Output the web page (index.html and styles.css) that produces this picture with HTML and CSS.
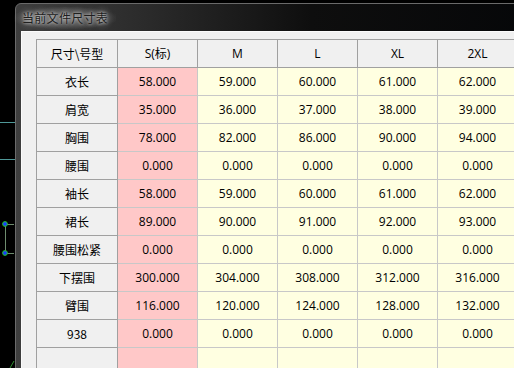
FILE: index.html
```html
<!DOCTYPE html>
<html lang="zh-CN">
<head>
<meta charset="utf-8">
<title>当前文件尺寸表</title>
<link rel="stylesheet" href="styles.css">
</head>
<body>
<div class="desk">
  <svg class="drawing" width="514" height="368" viewBox="0 0 514 368">
    <line x1="0" y1="122.5" x2="16" y2="122.5" stroke="#4f9898" stroke-width="1"/>
    <line x1="0" y1="159.5" x2="16" y2="159.5" stroke="#4f9898" stroke-width="1"/>
    <polyline points="14,224.5 5.5,224.5 5.5,253.5 14,253.5" fill="none" stroke="#6e8c6e" stroke-width="1"/>
    <circle cx="5" cy="224" r="2.4" fill="#1a3cff" stroke="#22c922" stroke-width="1"/>
    <circle cx="5" cy="253" r="2.4" fill="#1a3cff" stroke="#22c922" stroke-width="1"/>
    <line x1="10" y1="368" x2="14" y2="361" stroke="#2e8f2e" stroke-width="1"/>
  </svg>

  <div class="window">
    <div class="titlebar"><span class="title">当前文件尺寸表</span></div>
    <div class="client">
      <table class="sizes">
        <thead>
          <tr><th class="fixed">尺寸\号型</th><th>S(标)</th><th>M</th><th>L</th><th>XL</th><th>2XL</th></tr>
        </thead>
        <tbody>
          <tr><th class="fixed">衣长</th><td class="base">58.000</td><td>59.000</td><td>60.000</td><td>61.000</td><td>62.000</td></tr>
          <tr><th class="fixed">肩宽</th><td class="base">35.000</td><td>36.000</td><td>37.000</td><td>38.000</td><td>39.000</td></tr>
          <tr><th class="fixed">胸围</th><td class="base">78.000</td><td>82.000</td><td>86.000</td><td>90.000</td><td>94.000</td></tr>
          <tr><th class="fixed">腰围</th><td class="base">0.000</td><td>0.000</td><td>0.000</td><td>0.000</td><td>0.000</td></tr>
          <tr><th class="fixed">袖长</th><td class="base">58.000</td><td>59.000</td><td>60.000</td><td>61.000</td><td>62.000</td></tr>
          <tr><th class="fixed">裙长</th><td class="base">89.000</td><td>90.000</td><td>91.000</td><td>92.000</td><td>93.000</td></tr>
          <tr><th class="fixed">腰围松紧</th><td class="base">0.000</td><td>0.000</td><td>0.000</td><td>0.000</td><td>0.000</td></tr>
          <tr><th class="fixed">下摆围</th><td class="base">300.000</td><td>304.000</td><td>308.000</td><td>312.000</td><td>316.000</td></tr>
          <tr><th class="fixed">臂围</th><td class="base">116.000</td><td>120.000</td><td>124.000</td><td>128.000</td><td>132.000</td></tr>
          <tr><th class="fixed">938</th><td class="base">0.000</td><td>0.000</td><td>0.000</td><td>0.000</td><td>0.000</td></tr>
          <tr><th class="fixed"></th><td class="base"></td><td></td><td></td><td></td><td></td></tr>
        </tbody>
      </table>
    </div>
  </div>
</div>
</body>
</html>
```

FILE: styles.css
```css
html, body {
  margin: 0;
  padding: 0;
  background: #000;
  overflow: hidden;
}

.desk {
  position: relative;
  width: 514px;
  height: 368px;
  overflow: hidden;
  background: #000;
}

.drawing {
  position: absolute;
  left: 0;
  top: 0;
}

/* dark glass dialog frame */
.window {
  position: absolute;
  left: 15px;
  top: 3px;
  width: 540px;
  height: 420px;
  box-sizing: border-box;
  border: 1px solid #6a6a6a;
  border-radius: 6px 6px 0 0;
  padding-left: 5px;
  background: linear-gradient(90deg, #3e3e3e 0%, #2a2a2a 25%, #0e0e0e 55%, #050608 100%);
  display: flex;
  flex-direction: column;
}

.titlebar {
  height: 27px;
  flex: none;
  display: flex;
  align-items: center;
  padding-left: 1px;
}

.title {
  font-family: "Noto Sans CJK SC", sans-serif;
  font-size: 12px;
  letter-spacing: 0.3px;
  color: #202020;
  background: radial-gradient(ellipse at center, rgba(200, 200, 200, 0.28) 0%, rgba(200, 200, 200, 0.12) 55%, rgba(200, 200, 200, 0) 75%);
  padding: 4px 8px;
  margin-left: -8px;
  text-shadow: 0 0 3px rgba(255, 255, 255, 0.7), 0 0 6px rgba(255, 255, 255, 0.55), 0 0 10px rgba(255, 255, 255, 0.4);
  line-height: 14px;
  margin-top: 1px;
}

.client {
  flex: 1;
  background: #f0f0f0;
  border-top: 1px solid #fbfbfb;
  border-left: 1px solid #fbfbfb;
  padding: 7px 0 0 14px;
}

/* size grid */
.sizes {
  border-collapse: collapse;
  table-layout: fixed;
  font-family: "Open Sans", "Noto Sans CJK SC", sans-serif;
  font-size: 12px;
  color: #000;
}

.sizes th,
.sizes td {
  height: 28px;
  padding: 0;
  text-align: center;
  vertical-align: middle;
  font-weight: normal;
  line-height: 14px;
  box-sizing: border-box;
}

.sizes th {
  width: 80px;
  background: #f0f0f0;
  border: 1px solid #a0a0a0;
}

.sizes th.fixed {
  width: 81px;
  font-family: "Noto Sans CJK SC", "Open Sans", sans-serif;
}

.sizes td {
  background: #ffffe1;
  border: 1px solid #c8c8c8;
}

.sizes td.base {
  background: #ffc8c8;
}
```
